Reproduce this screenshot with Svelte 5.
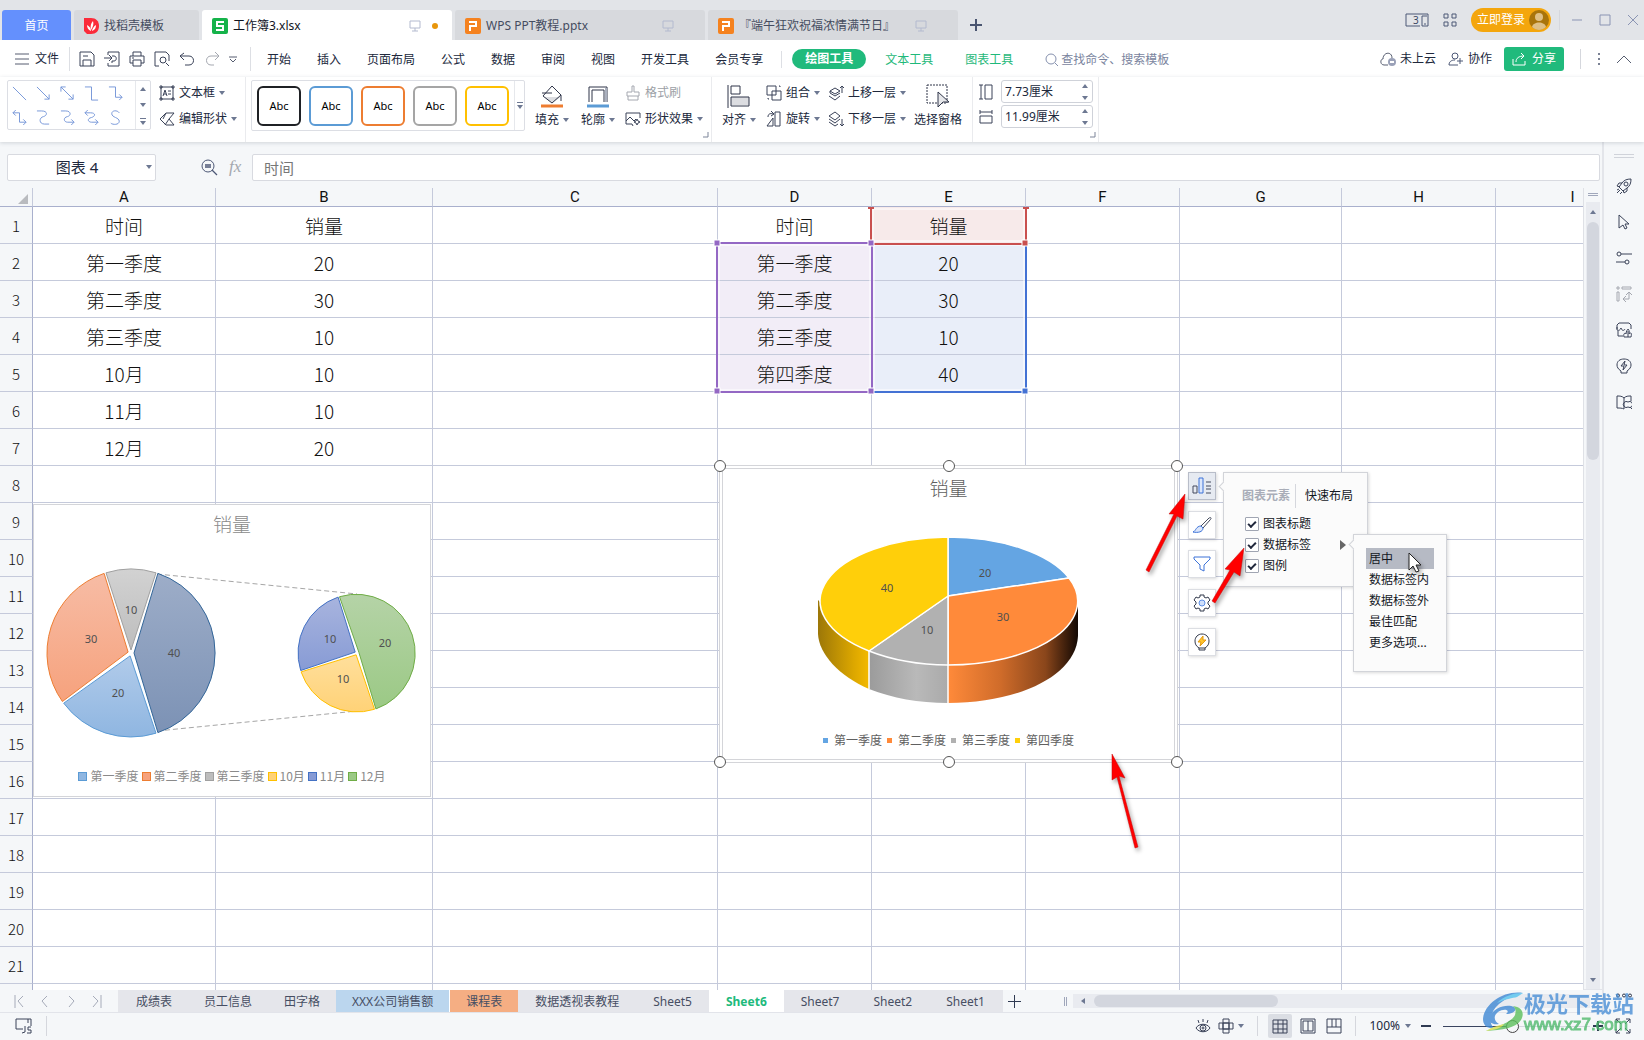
<script>
  const menu = ['开始', '插入', '页面布局', '公式', '数据', '审阅', '视图', '开发工具', '会员专享'];

  const shapes = [
    'M1 1L15 15',
    'M1 1L14 14M14 9V14H9',
    'M1 1L14 14M14 9V14H9M1 6V1H6',
    'M1 1H8V15H15',
    'M1 1H8V12H15M12 9L15 12L12 15',
    'M1 3H8V13H15M4 0L1 3L4 6M12 10L15 13L12 16',
    'M1 1H6C13 1 12 6 8 7C3 8 3 15 9 15H14',
    'M1 1H6C12 1 12 6 8 7C3 8 4 13 8 13H15M12 10L15 13L12 16',
    'M1 3H7C13 3 12 7 8 8C3 9 4 13 8 13H15M4 0L1 3L4 6M12 10L15 13L12 16',
    'M12 3C10 0 4 0 4 4C4 8 12 8 12 12C12 16 5 16 3 14'
  ];

  const styleColors = ['#1f2125', '#5b9bd5', '#ed7d31', '#a5a5a5', '#ffc000'];

  const columns = [
    ['A', 183], ['B', 217], ['C', 285], ['D', 154], ['E', 154], ['F', 154],
    ['G', 162], ['H', 154], ['I', 154], ['J', 154], ['K', 154], ['L', 154]
  ];

  const cells = {
    A: ['时间', '第一季度', '第二季度', '第三季度', '10月', '11月', '12月'],
    B: ['销量', '20', '30', '10', '10', '10', '20'],
    D: ['时间', '第一季度', '第二季度', '第三季度', '第四季度'],
    E: ['销量', '20', '30', '10', '40']
  };

  const rows = Array.from({ length: 30 }, (_, i) => i + 1);

  const sheets = [
    { name: '成绩表' }, { name: '员工信息' }, { name: '田字格' },
    { name: 'XXX公司销售额', tint: 'blue wide' }, { name: '课程表', tint: 'orange' },
    { name: '数据透视表教程', tint: 'wide' }, { name: 'Sheet5', tint: 'wide' }, { name: 'Sheet6', tint: 'active wide' },
    { name: 'Sheet7', tint: 'wide' }, { name: 'Sheet2', tint: 'wide' }, { name: 'Sheet1', tint: 'wide' }
  ];

  const tones = {
    blue: ['#b1cbea', '#8fb6e1', '#5b9bd5'],
    orange: ['#f7bca5', '#f6a27d', '#ed7d31'],
    gray: ['#d2d2d2', '#bdbdbd', '#a0a0a0'],
    yellow: ['#ffdf9c', '#ffd277', '#ffc000'],
    indigo: ['#a8b4de', '#879bd5', '#4472c4'],
    green: ['#b5d3a7', '#9bc985', '#70ad47'],
    navy: ['#9dadc8', '#7c92b5', '#336699']
  };

  function slice(cx, cy, r, from, to, shift = 3) {
    const rad = (a) => ((a - 90) * Math.PI) / 180;
    const mid = rad((from + to) / 2);
    const ox = cx + shift * Math.cos(mid);
    const oy = cy + shift * Math.sin(mid);
    const pt = (a) => `${(cx + r * Math.cos(rad(a))).toFixed(1)} ${(cy + r * Math.sin(rad(a))).toFixed(1)}`;
    const gap = 0.7;
    return `M${ox.toFixed(1)} ${oy.toFixed(1)}L${pt(from + gap)}A${r} ${r} 0 ${to - from > 180 ? 1 : 0} 1 ${pt(to - gap)}Z`;
  }

  const pieSlices = [
    ['navy', slice(98, 148, 84, 18, 162), 141, 152, '40'],
    ['blue', slice(98, 148, 84, 162, 234), 85, 192, '20'],
    ['orange', slice(98, 148, 84, 234, 342), 58, 138, '30'],
    ['gray', slice(98, 148, 84, 342, 378), 98, 109, '10'],
    ['green', slice(324, 148, 59, -18, 162, 2), 352, 142, '20'],
    ['yellow', slice(324, 148, 59, 162, 252, 2), 310, 178, '10'],
    ['indigo', slice(324, 148, 59, 252, 342, 2), 297, 138, '10']
  ];

  const legendA = [
    ['第一季度', 'blue'], ['第二季度', 'orange'], ['第三季度', 'gray'],
    ['10月', 'yellow'], ['11月', 'indigo'], ['12月', 'green']
  ];
  const legendB = [
    ['第一季度', 'blue'], ['第二季度', 'orange'], ['第三季度', 'gray'], ['第四季度', 'yellow']
  ];

  const labelItems = ['居中', '数据标签内', '数据标签外', '最佳匹配', '更多选项...'];
  let elements = $state([
    { name: '图表标题', on: true, more: false },
    { name: '数据标签', on: true, more: true },
    { name: '图例', on: true, more: false }
  ]);
  let zoom = $state(47);

  const side = [
    ['火箭', 'M6 5C8 2 11 1 15 1C15 5 14 8 11 10L7 13L3 9ZM6 5H3L1 8L4 9M11 10V13L8 15L7 12M1 12L3 11M1 15L4 12M4 16L6 14', 'M10 4A2 2 0 1 1 10 8A2 2 0 1 1 10 4'],
    ['选择', 'M3 1L13 10H9L11 14L9 15L7 11L3 14Z', ''],
    ['属性', 'M5 4H16M0 12H9', 'M3 2A2 2 0 1 1 3 6A2 2 0 1 1 3 2M11 10A2 2 0 1 1 11 14A2 2 0 1 1 11 10'],
    ['透视', 'M1 1H3V3H1ZM6 1H15V3H6ZM1 6H3V15H1ZM7 13H13V6M10 9L13 6L16 9M10 10L7 13L10 16', ''],
    ['素材', 'M1 7V3L3 1H13L15 3V7M1 5L1 8C3 9 4 8 5 6C6 9 8 9 9 7M2 9V14H7', 'M8 15C7 12 9 10 10 12C10 9 12 7 12 7C14 9 13 11 13 12C15 10 16 11 15 15ZM12 9V15'],
    ['灵感', 'M5 13V15H11V13C14 11 15 9 15 7C15 3 12 1 8 1C4 1 1 3 1 7C1 9 2 11 5 13Z', 'M9 3L5 8H8L7 12L11 7H8Z'],
    ['查找', 'M8 4C6 2 4 2 1 2V14C4 14 6 14 8 15M8 4C10 2 12 2 15 2V7M8 4V15', 'M12 8A3 3 0 1 1 12 13A3 3 0 1 1 12 8M14 13L16 15']
  ];
</script>

{#snippet icon(d, size = 16)}
  <svg class="ic" width={size} height={size} viewBox="0 0 16 16" aria-hidden="true"><path {d} /></svg>
{/snippet}

{#snippet caret()}
  <svg class="caret" width="6" height="4" viewBox="0 0 6 4" aria-hidden="true"><path d="M0 0H6L3 4Z" /></svg>
{/snippet}

{#snippet monitor()}
  <svg class="monitor" width="12" height="12" viewBox="0 0 12 12" aria-hidden="true"><path d="M1 1H11V8H1ZM6 8V11M3 11H9" /></svg>
{/snippet}

{#snippet pptIcon()}
  <svg width="16" height="16" viewBox="0 0 16 16" aria-hidden="true"><rect width="16" height="16" rx="2" fill="#f5821f" /><path d="M5 13V8H11V4H4" fill="none" stroke="#fff" stroke-width="2" /></svg>
{/snippet}

<div class="app">
  <header class="tabs">
    <button class="tab home">首页</button>
    <button class="tab docer">
      <svg width="15" height="16" viewBox="0 0 15 16" aria-hidden="true"><path d="M0 0H7C12 0 15 3 15 8S12 16 7 16H3L0 13Z" fill="#fb2b3a" /><path d="M7 13C4 12 3 9 3 7C5 8 7 10 7 13ZM7 12C6 8 7 5 9 3C10 6 9 9 7 12ZM8 13C8 11 10 8 12 7C12 10 11 12 8 13Z" fill="#fff" /></svg>
      <span>找稻壳模板</span>
    </button>
    <button class="tab doc current">
      <svg width="16" height="16" viewBox="0 0 16 16" aria-hidden="true"><rect width="16" height="16" rx="2" fill="#15b34a" /><path d="M12 4H5V8H11V12H4" fill="none" stroke="#fff" stroke-width="2" /></svg>
      <span class="grow">工作簿3.xlsx</span>
      {@render monitor()}
      <i class="dirty"></i>
    </button>
    <button class="tab doc">
      {@render pptIcon()}
      <span class="grow">WPS PPT教程.pptx</span>
      {@render monitor()}
    </button>
    <button class="tab doc">
      {@render pptIcon()}
      <span class="grow">『端午狂欢祝福浓情满节日』</span>
      {@render monitor()}
    </button>
    <button class="plain newtab" aria-label="新建">
      <svg width="12" height="12" viewBox="0 0 12 12"><path d="M6 0V12M0 6H12" stroke="#4a5570" stroke-width="2" /></svg>
    </button>
    <div class="window">
      <svg width="24" height="14" viewBox="0 0 24 14" aria-hidden="true"><path d="M15 13H1V1H23V13H17V3H22M19 11H21" fill="none" stroke="#4d5876" /><text x="8" y="11" font-size="10" fill="#3c4763">3</text></svg>
      <svg width="14" height="14" viewBox="0 0 14 14" aria-hidden="true"><path d="M1 1H5V5H1ZM9 1H13V5H9ZM1 9H5V13H1ZM9 9H13V13H9Z" fill="none" stroke="#4d5876" /></svg>
      <button class="login">立即登录
        <svg width="20" height="20" viewBox="0 0 20 20" aria-hidden="true"><circle cx="10" cy="10" r="10" fill="#a9740b" /><circle cx="10" cy="7" r="4" fill="#dfbf85" /><path d="M3 17C4 11 16 11 17 17C13 21 7 21 3 17Z" fill="#dfbf85" /></svg>
      </button>
      <i class="vline"></i>
      <button class="plain" aria-label="最小化"><svg width="12" height="12" viewBox="0 0 12 12"><path d="M1 6H11" stroke="#8a94b3" /></svg></button>
      <button class="plain" aria-label="最大化"><svg width="12" height="12" viewBox="0 0 12 12"><path d="M1 1H11V11H1Z" fill="none" stroke="#8a94b3" /></svg></button>
      <button class="plain" aria-label="关闭"><svg width="12" height="12" viewBox="0 0 12 12"><path d="M1 1L11 11M11 1L1 11" stroke="#8a94b3" /></svg></button>
    </div>
  </header>

  <nav class="menu">
    <button class="plain file">
      <svg width="14" height="12" viewBox="0 0 14 12" aria-hidden="true"><path d="M0 1H14M0 6H14M0 11H14" stroke="#565d70" /></svg>文件
    </button>
    <div class="quick">
      <button class="plain" aria-label="保存">{@render icon('M1 1H12L15 4V15H1ZM4 15V9H12V15M4 5H9')}</button>
      <button class="plain" aria-label="输出">{@render icon('M4 4V1H15V15H4V12M0 7H8M5 4L8 7L5 10M8 12V10H10C13 10 13 5 10 5H8')}</button>
      <button class="plain" aria-label="打印">{@render icon('M4 5V1H12V5M4 12H1V5H15V12H12M4 9H12V15H4ZM3 7H5')}</button>
      <button class="plain" aria-label="预览">{@render icon('M5 15H1V1H12L15 4V10M9 6A3 3 0 1 1 9 12A3 3 0 1 1 9 6M12 12L15 15')}</button>
      <button class="plain" aria-label="撤销">{@render icon('M5 2L1 5L5 9M1 5H10C16 5 16 14 10 14H6')}</button>
      <button class="plain faded" aria-label="恢复">{@render icon('M11 1L15 5L11 9M15 5H7C1 5 1 14 7 14H10')}</button>
      <button class="plain" aria-label="更多"><svg width="8" height="7" viewBox="0 0 8 7"><path d="M0 1H8M1 3L4 6L7 3" fill="none" stroke="#565d70" /></svg></button>
    </div>
    <div class="items">
      {#each menu as item}<button class="plain">{item}</button>{/each}
    </div>
    <div class="tools">
      <button class="pill">绘图工具</button>
      <button class="plain green">文本工具</button>
      <button class="plain green">图表工具</button>
      <button class="plain search">
        <svg width="14" height="14" viewBox="0 0 14 14" aria-hidden="true"><circle cx="6" cy="6" r="5" fill="none" stroke="#8590ae" /><path d="M10 10L13 13" stroke="#8590ae" /></svg>查找命令、搜索模板
      </button>
    </div>
    <div class="account">
      <button class="plain"><svg width="16" height="16" viewBox="0 0 16 16" aria-hidden="true"><path d="M8 14H4C0 14 0 8 3 8C3 1 12 0 12 7" fill="none" stroke="#565d70" /><circle cx="12" cy="11" r="4" fill="#9aa1b8" /><path d="M10 11H14" stroke="#fff" stroke-width="2" /></svg>未上云</button>
      <button class="plain"><svg width="16" height="16" viewBox="0 0 16 16" aria-hidden="true"><path d="M7 2A3 3 0 1 1 7 8A3 3 0 1 1 7 2M10 14H1C1 11 3 9 7 9M12 7V13M9 10H15" fill="none" stroke="#4d5876" /></svg>协作</button>
      <button class="share"><svg width="14" height="14" viewBox="0 0 14 14" aria-hidden="true"><path d="M1 7V13H13V9M4 10C4 6 7 4 12 4M9 1L12 4L9 7" fill="none" stroke="#fff" /></svg>分享</button>
      <i class="vline"></i>
      <button class="plain" aria-label="更多"><svg width="4" height="14" viewBox="0 0 4 14"><path d="M1 1H3V3H1ZM1 6H3V8H1ZM1 11H3V13H1Z" fill="#7a8194" /></svg></button>
      <button class="plain fold" aria-label="收起"><svg width="16" height="9" viewBox="0 0 16 9"><path d="M1 8L8 1L15 8" fill="none" stroke="#565d70" /></svg></button>
    </div>
  </nav>

  <section class="ribbon">
    <div class="group">
      <div class="gallery">
        <div class="shapes">
          {#each shapes as d, i}<button class="plain" aria-label={`线条 ${i + 1}`}>{@render icon(d, 15)}</button>{/each}
        </div>
        <div class="spin">
          <button class="plain flip" aria-label="上">{@render caret()}</button>
          <button class="plain" aria-label="下">{@render caret()}</button>
          <button class="plain bar" aria-label="全部">{@render caret()}</button>
        </div>
      </div>
      <div class="stack">
        <button class="plain"><svg class="ic" width="16" height="16" viewBox="0 0 16 16" aria-hidden="true"><path d="M2 2H14V14H2ZM1 1H3V3H1ZM13 1H15V3H13ZM1 13H3V15H1ZM13 13H15V15H13ZM4 11L6 5L8 11M5 9H7M9 6H12M9 9H12" /></svg>文本框{@render caret()}</button>
        <button class="plain">{@render icon('M7 2L1 8L7 14H15L10 8L15 2ZM7 2L4 8M10 8L6 14')}编辑形状{@render caret()}</button>
      </div>
    </div>

    <div class="group styles">
      <div class="gallery cards">
        {#each styleColors as c}<button class="card" style:border-color={c}>Abc</button>{/each}
        <button class="plain bar drop" aria-label="更多样式">{@render caret()}</button>
      </div>
      <button class="plain big">
        <svg width="24" height="24" viewBox="0 0 24 24" aria-hidden="true"><path d="M4 13H21L12 19Z" fill="#dcdde1" /><path d="M3 12L12 2L21 11L12 19ZM2 9H12M21 11V17" fill="none" stroke="#2f3549" /><path d="M1 22H23" stroke="#ee7d31" stroke-width="3" /></svg>
        <span>填充{@render caret()}</span>
      </button>
      <button class="plain big">
        <svg width="24" height="24" viewBox="0 0 24 24" aria-hidden="true"><path d="M3 18V3H21V18M6 18V6H18V18" fill="none" stroke="#2f3549" /><path d="M20 4V18" stroke="#aab0be" stroke-width="2" /><path d="M1 22H23" stroke="#5b9bd5" stroke-width="3" /></svg>
        <span>轮廓{@render caret()}</span>
      </button>
      <div class="stack">
        <button class="plain faded">{@render icon('M7 7V1H9V7H14V11H2V7ZM3 11V15H13V11')}格式刷</button>
        <button class="plain">{@render icon('M7 13H1V2H15V7M1 10L5 6L9 10L11 8M12 8L13 10L15 11L13 12L12 14L11 12L9 11L11 10ZM7 13L8 15')}形状效果{@render caret()}</button>
      </div>
      <svg class="corner" width="6" height="6" viewBox="0 0 6 6" aria-hidden="true"><path d="M5 0V5H0" /></svg>
    </div>

    <div class="group arrange">
      <button class="plain big">
        <svg width="24" height="24" viewBox="0 0 24 24" aria-hidden="true"><path d="M4 13H22V21H4Z" fill="#dcdde1" /><path d="M1 1V24M4 2H13V10H4ZM4 13H22V22H4Z" fill="none" stroke="#2f3549" /></svg>
        <span>对齐{@render caret()}</span>
      </button>
      <div class="stack">
        <button class="plain">{@render icon('M1 1H10V10H1ZM6 6H15V15H6ZM13 1H14V2M2 13V14H3')}组合{@render caret()}</button>
        <button class="plain">{@render icon('M9 1H14V15H9ZM7 7V15H1ZM2 6C2 3 4 2 7 3M5 0L8 3L5 5')}旋转{@render caret()}</button>
      </div>
      <div class="stack">
        <button class="plain">{@render icon('M7 3L12 6L7 9L2 6ZM2 6V8L7 11L12 8M1 11L7 15L12 11M14 8V1M12 3L14 1L16 3')}上移一层{@render caret()}</button>
        <button class="plain">{@render icon('M7 1L12 5L7 9L1 5ZM1 8L7 12L12 8M1 11L7 15L10 13M14 8V15M12 13L14 15L16 13')}下移一层{@render caret()}</button>
      </div>
      <button class="plain big">
        <svg width="24" height="24" viewBox="0 0 24 24" aria-hidden="true"><path d="M1 1H21V19H1Z" fill="none" stroke="#2f3549" stroke-dasharray="2 1" /><path d="M12 8L23 18H17L12 23Z" fill="#e6e7ea" stroke="#2f3549" /></svg>
        <span>选择窗格</span>
      </button>
    </div>

    <div class="group size">
      <label class="field"><svg class="ic" width="14" height="16" viewBox="0 0 14 16" aria-hidden="true"><path d="M0 1H4M2 1V15M0 15H4M6 1H13V15H6Z" /></svg>
        <span class="num"><input value="7.73厘米" aria-label="高度" /><span class="ud"><span class="flip">{@render caret()}</span>{@render caret()}</span></span>
      </label>
      <label class="field"><svg class="ic" width="14" height="16" viewBox="0 0 14 16" aria-hidden="true"><path d="M1 1V5M1 3H13M13 1V5M1 7H13V14H1Z" /></svg>
        <span class="num"><input value="11.99厘米" aria-label="宽度" /><span class="ud"><span class="flip">{@render caret()}</span>{@render caret()}</span></span>
      </label>
      <svg class="corner" width="6" height="6" viewBox="0 0 6 6" aria-hidden="true"><path d="M5 0V5H0" /></svg>
    </div>
  </section>

  <main>
    <div class="work">
      <div class="formula">
        <div class="namebox"><input value="图表 4" aria-label="名称框" />{@render caret()}</div>
        <svg class="lens" width="17" height="17" viewBox="0 0 17 17" aria-hidden="true"><circle cx="7" cy="7" r="6" fill="none" stroke="#4d5876" /><path d="M4 6H10M4 8H10M11 11L16 16" stroke="#4d5876" stroke-width="1.3" /></svg>
        <em>fx</em>
        <input class="fx" value="时间" aria-label="编辑栏" />
      </div>

      <div class="viewport">
        <div class="sheet">
          <table>
            <colgroup>
              <col class="c-row" />
              {#each columns as [, w]}<col style:width={`${w}px`} />{/each}
            </colgroup>
            <thead>
              <tr><th class="all" aria-label="全选"><svg width="10" height="10" viewBox="0 0 10 10"><path d="M10 0V10H0Z" fill="#b9bbbf" /></svg></th>
                {#each columns as [name]}<th>{name}</th>{/each}</tr>
            </thead>
            <tbody>
              {#each rows as r}
                <tr><th>{r}</th>
                  {#each columns as [name]}
                    <td class:violet={name === 'D' && r > 1 && r < 6} class:rose={name === 'E' && r === 1} class:azure={name === 'E' && r > 1 && r < 6}>{cells[name]?.[r - 1] ?? ''}</td>
                  {/each}
                </tr>
              {/each}
            </tbody>
          </table>

          <svg class="overlay" aria-hidden="true">
            <path class="halo" d="M719 57V202H870V57ZM873 21H1024V53H873ZM874 57H1024V202H874Z" />
            <g fill="none" stroke-width="2">
              <path d="M872 204H1026V56" stroke="#4472d4" />
              <path d="M871 19V56H1026V19" stroke="#c9504f" />
              <path d="M717 55H872V204H717Z" stroke="#9468c4" />
            </g>
            <g stroke="#fff">
              <path d="M868 20H874M1023 20H1029" stroke="#c9504f" stroke-width="2" />
              <rect x="1022" y="52" width="6" height="6" fill="#c9504f" />
              <rect x="1022" y="200" width="6" height="6" fill="#4472d4" />
              <rect x="714" y="52" width="6" height="6" fill="#9468c4" /><rect x="868" y="52" width="6" height="6" fill="#9468c4" />
              <rect x="714" y="200" width="6" height="6" fill="#9468c4" /><rect x="868" y="200" width="6" height="6" fill="#9468c4" />
            </g>
          </svg>

          <figure class="chart first">
            <figcaption>销量</figcaption>
            <svg class="plot" viewBox="1 0 396 291" aria-label="复合饼图">
              <defs>
                {#each Object.entries(tones) as [k, t]}
                  <linearGradient id={`g-${k}`} x1="0" y1="0" x2="0" y2="1"><stop offset="0" stop-color={t[0]} /><stop offset="1" stop-color={t[1]} /></linearGradient>
                {/each}
              </defs>
              <path d="M124 69L324 89M124 226L324 206" stroke="#a6a6a6" stroke-dasharray="5 3" />
              {#each pieSlices as [k, d, x, y, t]}
                <path {d} fill={`url(#g-${k})`} stroke={tones[k][2]} />
                <text {x} {y}>{t}</text>
              {/each}
            </svg>
            <ul>
              {#each legendA as [name, k]}<li><i class={`key ${k}`}></i>{name}</li>{/each}
            </ul>
          </figure>

          <figure class="chart second">
            <figcaption>销量</figcaption>
            <svg class="plot" viewBox="0 2 457 296" aria-label="三维饼图">
              <defs>
                <linearGradient id="s-y" x1="0" x2="1"><stop offset="0" stop-color="#9c7708" /><stop offset="0.7" stop-color="#dca700" /><stop offset="1" stop-color="#f3b900" /></linearGradient>
                <linearGradient id="s-g" x1="0" x2="1"><stop offset="0" stop-color="#9b9b9b" /><stop offset="0.6" stop-color="#b9b9b9" /><stop offset="1" stop-color="#aaa" /></linearGradient>
                <linearGradient id="s-o" x1="0" x2="1"><stop offset="0" stop-color="#ff8a3a" /><stop offset="0.4" stop-color="#d06c2a" /><stop offset="0.75" stop-color="#8a461b" /><stop offset="1" stop-color="#120803" /></linearGradient>
              </defs>
              <path d="M98 136V170C99 190 119 212 149 225V187Z" fill="url(#s-y)" />
              <path d="M149 187V225C173 234 198 239 228 239V200Z" fill="url(#s-g)" />
              <path d="M228 200V239C298 239 356 212 358 172V136Z" fill="url(#s-o)" />
              <g stroke="#fff" stroke-width="1.5" stroke-linejoin="round">
                <path d="M228 132V73A130 64 0 0 1 349 114Z" fill="#64a5e3" />
                <path d="M228 132L349 114A130 64 0 0 1 228 201Z" fill="#ff8a3a" />
                <path d="M228 132V201A130 64 0 0 1 149 187Z" fill="#b1b1b1" />
                <path d="M228 132L149 187A130 64 0 0 1 228 73Z" fill="#ffcf0a" />
                <path d="M149 187V225M228 200V239" />
              </g>
              <text x="265" y="113">20</text><text x="167" y="128">40</text>
              <text x="283" y="157">30</text><text x="207" y="170">10</text>
            </svg>
            <ul>
              {#each legendB as [name, k]}<li><i class={`dot ${k}`}></i>{name}</li>{/each}
            </ul>
            <i class="knob nw"></i><i class="knob n"></i><i class="knob ne"></i>
            <i class="knob sw"></i><i class="knob s"></i><i class="knob se"></i>
          </figure>

          <div class="float-tools">
            <button class="on" aria-label="图表元素"><svg width="20" height="20" viewBox="0 0 20 20"><path d="M1 10H5V17H1ZM14 6H19M14 10H19M14 13H19M14 17H19" fill="none" stroke="#444b5e" /><path d="M7 2H11V17H7Z" fill="#dbe6fb" stroke="#3d73d8" /></svg></button>
            <button aria-label="图表样式"><svg width="20" height="20" viewBox="0 0 20 20"><path d="M9 11L17 3C19 2 20 3 18 5L11 13Z" fill="#fff" stroke="#444b5e" /><path d="M9 11L11 13C11 17 6 18 1 17C4 16 4 11 9 11Z" fill="#dbe6fb" stroke="#3d73d8" /></svg></button>
            <button aria-label="筛选"><svg width="20" height="20" viewBox="0 0 20 20"><path d="M2 3H18V5L12 11V17L8 15V11L2 5Z" fill="#fff" stroke="#3d73d8" /></svg></button>
            <button aria-label="设置"><svg width="20" height="20" viewBox="0 0 20 20"><path d="M8 2H12L12 4L14 5L16 4L18 7L16 9V11L18 13L16 16L14 15L12 16V18H8V16L6 15L4 16L2 13L4 11V9L2 7L4 4L6 5L8 4Z" fill="#fff" stroke="#333a4c" stroke-linejoin="round" /><circle cx="10" cy="10" r="3" fill="#cfdffb" stroke="#5f90e6" /></svg></button>
            <button aria-label="灵感"><svg width="20" height="20" viewBox="0 0 20 20"><path d="M7 16C4 14 3 12 3 9C3 5 6 2 10 2S17 5 17 9C17 12 16 14 13 16V18H7ZM7 16H13" fill="#fff" stroke="#333a4c" /><path d="M11 4L6 10H9L8 14L14 8H11Z" fill="#ffc52e" stroke="#e39a12" /></svg></button>
          </div>

          <div class="pop elements">
            <div class="pop-head"><button class="plain off">图表元素</button><i></i><button class="plain">快速布局</button></div>
            {#each elements as e}
              <label><input type="checkbox" bind:checked={e.on} />{e.name}
                {#if e.more}<svg class="more" width="6" height="10" viewBox="0 0 6 10" aria-hidden="true"><path d="M0 0L6 5L0 10Z" fill="#666" /></svg>{/if}
              </label>
            {/each}
          </div>

          <div class="pop sub">
            {#each labelItems as item, i}<button class="plain" class:hot={i === 0}>{item}</button>{/each}
          </div>

          <svg class="overlay marks" aria-hidden="true">
            <path d="M1409 365V382L1413 378L1416 384L1419 383L1416 377H1421Z" fill="#fff" stroke="#222" />
            <g fill="#f00" stroke="#c40808" stroke-width="0.5">
              <path d="M1185 306L1169 326L1174 326L1146 382L1149 384L1177 328L1183 331Z" />
              <path d="M1244 360L1225 381L1230 382L1212 413L1215 415L1234 384L1240 388Z" />
              <path d="M1112 566L1112 592L1117 589L1135 660L1138 659L1119 588L1125 590Z" />
            </g>
          </svg>
        </div>
        <div class="vscroll"><i class="split"></i><div class="track"><span class="flip">{@render caret()}</span><i class="thumb"></i><b></b>{@render caret()}</div></div>
      </div>

      <div class="sheetbar">
        <div class="pager">
          <button class="plain" aria-label="首个"><svg width="10" height="13" viewBox="0 0 10 13"><path d="M1 0V13M9 1L4 6L9 12" /></svg></button>
          <button class="plain" aria-label="上一个"><svg width="10" height="13" viewBox="0 0 10 13"><path d="M7 1L2 6L7 12" /></svg></button>
          <button class="plain" aria-label="下一个"><svg width="10" height="13" viewBox="0 0 10 13"><path d="M3 1L8 6L3 12" /></svg></button>
          <button class="plain" aria-label="最后"><svg width="10" height="13" viewBox="0 0 10 13"><path d="M1 1L6 6L1 12M9 0V13" /></svg></button>
        </div>
        <div class="sheets">
          {#each sheets as s}<button class={`plain st ${s.tint ?? ''}`}>{s.name}</button>{/each}
        </div>
        <button class="plain addsheet" aria-label="新建工作表"><svg width="13" height="13" viewBox="0 0 13 13"><path d="M6.5 0V13M0 6.5H13" stroke="#2f3a52" /></svg></button>
        <i class="grip"></i>
        <div class="hscroll"><span class="left">{@render caret()}</span><i></i></div>
      </div>
    </div>

    <aside>
      <i class="grip2"></i>
      {#each side as [name, a, b], i}
        <button class="plain" class:faded={i === 3} aria-label={name}><svg class="ic" width="16" height="16" viewBox="0 0 16 16"><path d={a} /><path d={b} /></svg></button>
      {/each}
      <button class="plain dots" aria-label="更多"><svg width="16" height="5" viewBox="0 0 16 5"><path d="M2 1A1 1 0 1 1 2 4A1 1 0 1 1 2 1M8 1A1 1 0 1 1 8 4A1 1 0 1 1 8 1M14 1A1 1 0 1 1 14 4A1 1 0 1 1 14 1" fill="none" stroke="#2f3549" /></svg></button>
    </aside>
  </main>

  <footer>
    <button class="plain js" aria-label="宏"><svg class="ic" width="17" height="16" viewBox="0 0 17 16"><path d="M8 11H1V1H16V8M13 5V1M10 8V14L7 15M16 9H13V12H16V15H12" /></svg></button>
    <i class="vline"></i>
    <div class="views">
      <button class="plain" aria-label="护眼">{@render icon('M1 10C4 5 12 5 15 10C12 15 4 15 1 10ZM8 7A3 3 0 1 1 8 13A3 3 0 1 1 8 7M8 9A1 1 0 1 1 8 11A1 1 0 1 1 8 9M8 1V4M3 2L4 5M13 2L12 5')}</button>
      <button class="plain cross" aria-label="阅读模式">{@render icon('M5 1H11V15H5ZM1 5H15V11H1ZM5 5H11V11H5Z')}{@render caret()}</button>
      <i class="vline"></i>
      <button class="plain sel" aria-label="普通视图">{@render icon('M1 2H15V15H1ZM1 6H15M1 11H15M6 2V15M11 2V15')}</button>
      <button class="plain" aria-label="页面视图">{@render icon('M1 1H15V15H1ZM3 3H13V13H3ZM8 3V13')}</button>
      <button class="plain" aria-label="分页预览">{@render icon('M1 1H15V15H1ZM1 9H10M6 1V9M10 1V9H15')}</button>
      <i class="vline"></i>
      <button class="plain pct">100%{@render caret()}</button>
      <button class="plain" aria-label="缩小"><svg width="10" height="10" viewBox="0 0 10 10"><path d="M0 5H10" stroke="#2f3a52" stroke-width="2" /></svg></button>
      <input type="range" min="0" max="100" bind:value={zoom} aria-label="缩放" />
      <button class="plain zoomin" aria-label="放大"><svg width="10" height="10" viewBox="0 0 10 10"><path d="M0 5H10M5 0V10" stroke="#2f3a52" stroke-width="2" /></svg></button>
      <button class="plain" aria-label="全屏">{@render icon('M1 5V1H5M11 1H15V5M15 11V15H11M5 15H1V11M1 1L6 6M15 1L10 6M15 15L10 10M1 15L6 10')}</button>
    </div>
  </footer>

  <div class="brand">
    <svg width="42" height="40" viewBox="0 0 42 40" aria-hidden="true">
      <path d="M41 1C22 -2 2 12 1 27C1 34 6 37 12 36C6 31 8 20 17 12C24 6 33 3 41 1Z" fill="#3f88d4" />
      <path d="M41 1C31 1 22 4 15 11C23 7 31 6 35 5Z" fill="#55c4ef" />
      <path d="M7 26C12 14 26 12 32 15C36 19 30 22 24 22C29 18 22 16 16 20C11 24 12 29 17 32C11 33 7 31 7 26Z" fill="#3f88d4" />
      <path d="M31 14C40 15 43 21 39 28C34 36 20 38 4 39C17 34 30 30 33 23C34 19 34 17 31 14Z" fill="#5cc05c" />
      <path d="M4 39C10 35 17 33 22 32C20 36 12 38 4 39Z" fill="#d9e04a" />
    </svg>
    <div><strong>极光下载站</strong><span>www.xz7.com</span></div>
  </div>
</div>

<style>
  :global(body) { overflow: hidden; }
  .app {
    position: relative;
    display: flex;
    flex-direction: column;
    height: 100vh;
    overflow: hidden;
    font: 12px/16px "Noto Sans", "Noto Sans CJK SC", sans-serif;
    color: #20283c;
    background: #f5f7f9;
  }
  .app * { box-sizing: border-box; }
  button, input { font: inherit; color: inherit; }
  button { white-space: nowrap; cursor: pointer; }
  svg { display: block; flex: none; }
  .plain { display: flex; align-items: center; padding: 0; border: 0; background: none; }
  .ic { fill: none; stroke: #3a4258; }
  .caret { fill: #6d7892; }
  .flip { transform: rotate(180deg); }
  .faded { color: #9c9fa6; }
  .faded .ic { stroke: #a5a8b0; }
  .vline { width: 1px; height: 20px; background: #d5d7dd; }

  .tabs { display: flex; align-items: flex-end; height: 40px; padding-left: 2px; gap: 3px; background: #e2e4e8; flex: none; }
  .tab { display: flex; align-items: center; height: 30px; gap: 5px; padding: 2px 10px 0; border: 0; border-radius: 3px 3px 0 0; background: #d7d9dd; color: #454c60; text-align: left; }
  .home { width: 69px; justify-content: center; background: #6490fd; color: #fff; }
  .docer { width: 125px; }
  .doc { width: 250px; padding-right: 31px; }
  .current { background: #fff; color: #10141e; padding-right: 14px; }
  .grow { flex: 1; }
  .monitor { fill: none; stroke: #b3bacf; }
  .dirty { width: 6px; height: 6px; margin-left: 6px; border-radius: 50%; background: #e8960c; flex: none; }
  .newtab { height: 30px; margin-left: 9px; }
  .window { display: flex; align-items: center; gap: 14px; height: 40px; margin-left: auto; padding-right: 5px; }
  .window .plain { margin-left: 2px; }
  .login { display: flex; align-items: center; justify-content: space-between; width: 80px; height: 24px; padding: 0 2px 0 6px; border: 0; border-radius: 12px; background: #f4a60d; color: #fff; }
  .window .vline { margin: 0 -5px 0 -6px; }

  .menu { display: flex; align-items: center; height: 37px; padding: 1px 12px 0 15px; background: #fff; flex: none; }
  .file { gap: 6px; width: 55px; height: 24px; border-right: 1px solid #dddfe4; }
  .quick { display: flex; align-items: center; gap: 9px; width: 181px; height: 24px; padding-left: 9px; border-right: 1px solid #dddfe4; }
  .items { display: flex; gap: 26px; margin-left: 16px; padding-right: 18px; border-right: 1px solid #dddfe4; }
  .items .plain, .green, .search { padding-top: 1px; }
  .tools { display: flex; align-items: center; gap: 32px; margin-left: 10px; }
  .pill { height: 20px; margin-right: -13px; padding: 0 13px; border: 0; border-radius: 10px; background: #20ba7c; color: #fff; font-weight: 700; line-height: 20px; }
  .green { color: #1fb97a; }
  .search { gap: 2px; color: #7a849e; }
  .account { display: flex; align-items: center; gap: 12px; margin-left: auto; }
  .account .plain { gap: 4px; }
  .share { display: flex; align-items: center; justify-content: center; gap: 6px; width: 60px; height: 24px; border: 0; border-radius: 3px; background: #20ba7c; color: #fff; }
  .account .vline { margin: 0 4px; }
  .fold { margin-left: 3px; }

  .ribbon { position: relative; display: flex; height: 65px; padding-left: 7px; background: #fff; box-shadow: 0 1px 4px rgba(60, 70, 90, 0.2); flex: none; z-index: 1; }
  .group { position: relative; display: flex; align-items: flex-start; gap: 8px; padding-right: 8px; border-right: 1px solid #eaebee; }
  .styles { padding-left: 5px; }
  .arrange { padding: 0 10px 0 8px; }
  .size { flex-direction: column; gap: 2px; padding: 3px 5px 0 6px; }
  .gallery { display: flex; justify-content: space-between; width: 144px; height: 50px; margin-top: 3px; border: 1px solid #dcdee4; border-radius: 2px; }
  .shapes { display: grid; grid-template-columns: repeat(5, 24px); grid-auto-rows: 24px; margin-left: -1px; }
  .shapes .plain { justify-content: center; }
  .shapes .ic { stroke: #7394d8; }
  .spin { display: grid; grid-template-rows: repeat(3, 1fr); width: 15px; border-left: 1px solid #e6e8ec; }
  .spin .plain { justify-content: center; }
  .bar { flex-direction: column; justify-content: center; gap: 2px; }
  .bar::before { content: ""; width: 6px; height: 1px; background: #6d7892; }
  .cards { align-items: center; width: 274px; height: 51px; padding-left: 5px; gap: 8px; }
  .card { width: 44px; height: 40px; padding: 0; border: 2px solid; border-radius: 6px; background: #fff; font-size: 11px; color: #000; }
  .drop { flex: 1; height: 49px; margin-left: -3px; border-left: 1px solid #e6e8ec; }
  .stack { display: grid; grid-auto-rows: 26px; padding-top: 3px; }
  .stack .plain { gap: 4px; }
  .big { flex-direction: column; gap: 4px; padding-top: 7px; min-width: 38px; }
  .big span { display: flex; align-items: center; gap: 4px; }
  .corner { position: absolute; right: 2px; bottom: 4px; fill: none; stroke: #7d8599; }
  .field { display: flex; align-items: center; gap: 8px; }
  .num { display: flex; align-items: center; width: 92px; height: 23px; padding-right: 4px; border: 1px solid #cfd2d9; border-radius: 3px; }
  .num input { width: 100%; min-width: 0; padding: 0 3px; border: 0; background: none; outline: 0; }
  .ud { display: grid; gap: 8px; }

  main { display: flex; flex: 1; min-height: 0; }
  .work { display: flex; flex-direction: column; flex: 1; min-width: 0; }
  .formula { display: flex; align-items: center; height: 46px; padding: 4px 2px 0 7px; flex: none; font-size: 15px; }
  .namebox { display: flex; align-items: center; width: 149px; height: 27px; padding-right: 3px; border: 1px solid #d8dae0; border-radius: 2px; background: #fff; }
  .namebox input { width: 100%; min-width: 0; border: 0; background: none; text-align: center; outline: 0; }
  .lens { margin-left: 45px; }
  em { width: 34px; padding-left: 11px; font: italic 17px/20px "Liberation Serif", serif; color: #a4a7ae; }
  .fx { flex: 1; min-width: 0; height: 27px; padding: 0 11px; border: 1px solid #d8dae0; border-radius: 2px; background: #fff; color: #777; outline: 0; }

  .viewport { display: flex; flex: 1; min-height: 0; }
  .sheet { position: relative; flex: 1; min-width: 0; overflow: hidden; background: #fff; border-right: 1px solid #dfe1e6; font-family: "Noto Sans CJK SC", "Noto Sans", sans-serif; }
  table { width: 0; table-layout: fixed; border-collapse: separate; border-spacing: 0; }
  .c-row { width: 33px; }
  th, td { height: 37px; padding: 1px 0 0; border: solid #c5cadb; border-width: 0 1px 1px 0; text-align: center; }
  th { background: #f5f7f9; font-size: 15px; line-height: 18px; font-weight: 300; color: #111; }
  tbody th { border-right-color: #a9b0cd; }
  thead th { height: 19px; padding: 0; border-bottom-color: #a9b0cd; font-family: Roboto, sans-serif; font-weight: 400; }
  td { font-size: 19px; line-height: 35px; font-weight: 300; color: #111; }
  .all svg { margin: 3px 0 0 18px; }
  .violet { background: #f2edf7; }
  .rose { background: #f7eaea; }
  .azure { background: #e9eef9; }
  .overlay { position: absolute; inset: 0; width: 100%; height: 100%; pointer-events: none; }
  .halo { fill: none; stroke: #fff; }

  .chart { position: absolute; display: flex; flex-direction: column; align-items: center; justify-content: space-between; margin: 0; border: 1px solid #d4d5d9; background: #fff; }
  .first { left: 33px; top: 316px; width: 398px; height: 293px; padding: 6px 0 12px; color: #8a8a8a; }
  .second { left: 719px; top: 277px; width: 459px; height: 298px; padding: 9px 0 14px; outline: 1px solid #d4d5d9; outline-offset: -4px; color: #606060; }
  figcaption { font-size: 19px; line-height: 26px; font-weight: 300; }
  .plot { position: absolute; left: 0; top: 0; width: 100%; }
  .plot text { font: 11px "Noto Sans", sans-serif; fill: #505050; text-anchor: middle; }
  .chart ul { position: relative; display: flex; gap: 3px; margin: 0; padding: 0; list-style: none; }
  .second ul { gap: 5px; }
  .chart li { display: flex; align-items: center; gap: 3px; }
  .second li { gap: 6px; }
  .key { width: 9px; height: 9px; border: 1px solid; }
  .key.blue { background: #8fb6e1; border-color: #5b9bd5; }
  .key.orange { background: #f6a27d; border-color: #ed7d31; }
  .key.gray { background: #bdbdbd; border-color: #a0a0a0; }
  .key.yellow { background: #ffd277; border-color: #ffc000; }
  .key.indigo { background: #879bd5; border-color: #4472c4; }
  .key.green { background: #9bc985; border-color: #70ad47; }
  .dot { width: 5px; height: 5px; }
  .dot.blue { background: #64a5e3; }
  .dot.orange { background: #ff8a3a; }
  .dot.gray { background: #b1b1b1; }
  .dot.yellow { background: #ffcf0a; }
  .knob { position: absolute; width: 12px; height: 12px; border: 1px solid #555; border-radius: 50%; background: #fff; }
  .nw, .n, .ne { top: -6px; }
  .sw, .s, .se { bottom: -6px; }
  .nw, .sw { left: -6px; }
  .n, .s { left: 50%; margin-left: -6px; }
  .ne, .se { right: -6px; }

  .float-tools { position: absolute; left: 1188px; top: 284px; display: grid; gap: 11px; }
  .float-tools button { display: grid; place-items: center; width: 28px; height: 28px; padding: 0; border: 1px solid #dcdee3; background: #fff; box-shadow: 1px 1px 3px rgba(0, 0, 0, 0.15); }
  .float-tools .on { background: #e6eaf1; border-color: #b8bdc9; }
  .pop { position: absolute; border: 1px solid #d2d4d9; background: #fbfbfb; box-shadow: 1px 1px 3px rgba(0, 0, 0, 0.15); font-family: "Noto Sans", "Noto Sans CJK SC", sans-serif; color: #14181f; }
  .pop::before { content: ""; position: absolute; left: -4px; width: 6px; height: 6px; border: solid #d2d4d9; border-width: 0 0 1px 1px; background: #fbfbfb; transform: rotate(45deg); }
  .elements { left: 1223px; top: 284px; width: 145px; height: 115px; padding: 10px 0 0 18px; }
  .elements::before { top: 10px; }
  .pop-head { display: flex; align-items: center; height: 24px; margin-bottom: 6px; padding-top: 1px; }
  .pop-head i { width: 1px; height: 24px; margin: 0 9px 0 5px; background: #d5d7dd; }
  .off { color: #a9adb8; font-weight: 700; }
  .elements label { display: flex; align-items: center; gap: 4px; height: 21px; padding: 0 21px 0 3px; }
  .elements input { appearance: none; width: 14px; height: 14px; margin: 0; border: 1px solid #a0a5b2; border-radius: 1px; background: #fff; }
  .elements input:checked::before { content: ""; display: block; box-sizing: border-box; width: 8px; height: 5px; margin: 3px 0 0 2px; border: solid #20283c; border-width: 0 0 2px 2px; transform: rotate(-45deg); }
  .more { margin-left: auto; }
  .sub { left: 1353px; top: 346px; width: 94px; height: 138px; padding: 13px 12px; }
  .sub::before { top: 6px; }
  .sub .plain { width: 68px; height: 21px; padding-left: 3px; }
  .sub .hot { background: #b6bac4; }
  .marks { filter: drop-shadow(2px 3px 2px rgba(0, 0, 0, 0.35)); }

  .vscroll { display: flex; flex-direction: column; align-items: center; width: 18px; padding-top: 5px; gap: 6px; background: #f5f7f9; flex: none; }
  .split { width: 10px; height: 3px; border: solid #a0a7bb; border-width: 1px 0; }
  .track { display: flex; flex-direction: column; align-items: center; flex: 1; width: 14px; padding: 8px 0; gap: 8px; background: #e9ebf0; }
  .thumb { width: 12px; height: 238px; border-radius: 6px; background: #d3d6de; }
  .track b { flex: 1; }

  .sheetbar { display: flex; align-items: center; height: 22px; background: #f5f7f9; flex: none; box-shadow: 0 -1px 0 #e2e4ea, 0 1px 0 #e2e4ea; }
  .pager { display: flex; gap: 16px; width: 118px; padding-left: 14px; }
  .pager svg { fill: none; stroke: #a6abb9; }
  .sheets { display: flex; height: 22px; padding: 0 1px 0 2px; background: #e5e6eb; color: #474e63; }
  .st { padding: 1px 16px 0; }
  .wide { padding: 1px 17px 0; }
  .st.blue { padding: 1px 16px 0; background: #bbd6ee; border-right: 1px solid #fff; }
  .st.orange { background: #f5ae83; }
  .st.active { background: #fff; color: #20ba7c; font-weight: 700; }
  .addsheet { margin-left: 5px; }
  .grip { width: 3px; height: 9px; margin: 0 6px 0 43px; border: solid #a0a7bb; border-width: 0 1px; }
  .hscroll { display: flex; align-items: center; flex: 1; height: 14px; margin-right: 12px; padding-left: 7px; gap: 8px; background: #e9ebf0; }
  .hscroll i { width: 184px; height: 12px; border-radius: 6px; background: #d3d6de; }
  .left { transform: rotate(90deg); }

  aside { display: flex; flex-direction: column; align-items: center; gap: 20px; width: 42px; padding-top: 12px; border-left: 2px solid #e3e5ea; flex: none; }
  .grip2 { width: 20px; height: 4px; border: solid #d0d3da; border-width: 1px 0; }
  .dots { margin: auto 0 14px; }

  footer { display: flex; align-items: center; height: 28px; padding: 0 13px 0 15px; flex: none; }
  .js { margin-right: 14px; }
  .views { display: flex; align-items: center; gap: 10px; margin-left: auto; }
  .views .vline { margin: 0 3px; }
  .cross { gap: 4px; margin-left: -3px; }
  .sel { height: 24px; margin: 0 -2px 0 -3px; padding: 0 4px; background: #dbdee4; border-radius: 2px; }
  .pct { gap: 5px; }
  input[type="range"] { appearance: none; width: 147px; height: 14px; margin: 0 -7px 0 2px; background: linear-gradient(#3a4560, #3a4560) 0 50% / 47% 1px no-repeat, linear-gradient(#d5d8e0, #d5d8e0) 0 50% / 100% 1px no-repeat; }
  input[type="range"]::-webkit-slider-thumb { appearance: none; width: 13px; height: 13px; border: 1px solid #444; border-radius: 50%; background: #f5f7f9; }
  .zoomin { margin-right: 2px; }

  .brand { position: absolute; right: 10px; bottom: 5px; z-index: 2; display: flex; align-items: center; opacity: 0.8; pointer-events: none; }
  .brand div { display: grid; }
  .brand strong { font: 700 22px/26px "Noto Sans CJK SC", sans-serif; color: #4a8fd6; }
  .brand span { font: 17px/20px "Liberation Sans", sans-serif; color: #4fb96c; -webkit-text-stroke: 1px #4fb96c; }
</style>
